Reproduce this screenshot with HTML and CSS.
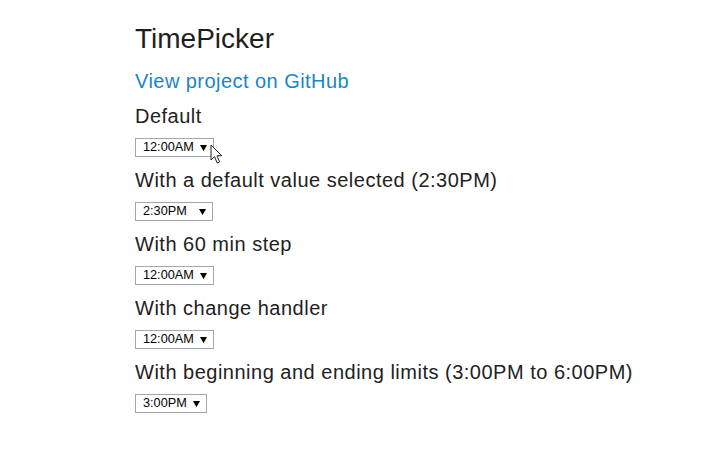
FILE: index.html
```html
<!DOCTYPE html>
<html>
<head>
<meta charset="utf-8">
<title>TimePicker</title>
<link rel="stylesheet" href="styles.css">
</head>
<body>
<main class="page">
  <h1 class="title">TimePicker</h1>
  <a class="gh-link" href="#">View project on GitHub</a>

  <section class="demo">
    <h4 class="label">Default</h4>
    <div class="picker-row">
      <span class="picker"><span class="value">12:00AM</span><svg class="caret" width="7" height="6" viewBox="0 0 7 6"><polygon points="0,0 7,0 3.5,6" fill="#000"/></svg></span>
      <svg class="cursor" width="14" height="21" viewBox="0 0 14 21"><path d="M1 1 L1 16 L4.5 12.6 L7.2 19 L9.6 18 L7 11.8 L11.8 11.8 Z" fill="#fff" stroke="#222" stroke-width="1" stroke-linejoin="round"/></svg>
    </div>
  </section>

  <section class="demo">
    <h4 class="label">With a default value selected (2:30PM)</h4>
    <div class="picker-row">
      <span class="picker fixed"><span class="value">2:30PM</span><svg class="caret" width="7" height="6" viewBox="0 0 7 6"><polygon points="0,0 7,0 3.5,6" fill="#000"/></svg></span>
    </div>
  </section>

  <section class="demo">
    <h4 class="label">With 60 min step</h4>
    <div class="picker-row">
      <span class="picker"><span class="value">12:00AM</span><svg class="caret" width="7" height="6" viewBox="0 0 7 6"><polygon points="0,0 7,0 3.5,6" fill="#000"/></svg></span>
    </div>
  </section>

  <section class="demo">
    <h4 class="label">With change handler</h4>
    <div class="picker-row">
      <span class="picker"><span class="value">12:00AM</span><svg class="caret" width="7" height="6" viewBox="0 0 7 6"><polygon points="0,0 7,0 3.5,6" fill="#000"/></svg></span>
    </div>
  </section>

  <section class="demo">
    <h4 class="label">With beginning and ending limits (3:00PM to 6:00PM)</h4>
    <div class="picker-row">
      <span class="picker"><span class="value">3:00PM</span><svg class="caret" width="7" height="6" viewBox="0 0 7 6"><polygon points="0,0 7,0 3.5,6" fill="#000"/></svg></span>
    </div>
  </section>
</main>
</body>
</html>
```

FILE: styles.css
```css
html, body {
  margin: 0;
  padding: 0;
  background: #ffffff;
}

body {
  font-family: "Liberation Sans", Arial, sans-serif;
  color: #222222;
}

.page {
  display: flex;
  flex-direction: column;
  align-items: flex-start;
  padding: 22.5px 0 0 135px;
}

.title {
  margin: 0;
  font-size: 28px;
  line-height: 32px;
  font-weight: normal;
  color: #1e1e1e;
}

.gh-link {
  display: block;
  margin-top: 14.6px;
  font-size: 20px;
  line-height: 24px;
  letter-spacing: 0.45px;
  color: #1a85c9;
  text-decoration: none;
}

.demo {
  display: flex;
  flex-direction: column;
  align-items: flex-start;
  margin-top: 11px;
}

.label {
  margin: 0 0 10px 0;
  font-size: 20px;
  line-height: 24px;
  font-weight: normal;
  letter-spacing: 0.5px;
  color: #222222;
}

.picker-row {
  position: relative;
  display: flex;
  align-items: center;
}

.picker {
  box-sizing: border-box;
  height: 19px;
  display: inline-flex;
  align-items: center;
  gap: 6px;
  padding: 0 6px 0 7px;
  border: 1px solid #a6a6a6;
  background: #ffffff;
  font-size: 12.7px;
  color: #000000;
  line-height: 17px;
}

.picker.fixed {
  width: 78px;
  justify-content: space-between;
}

.caret {
  display: block;
  flex: none;
}

.cursor {
  position: absolute;
  left: 75px;
  top: 6px;
}
```
